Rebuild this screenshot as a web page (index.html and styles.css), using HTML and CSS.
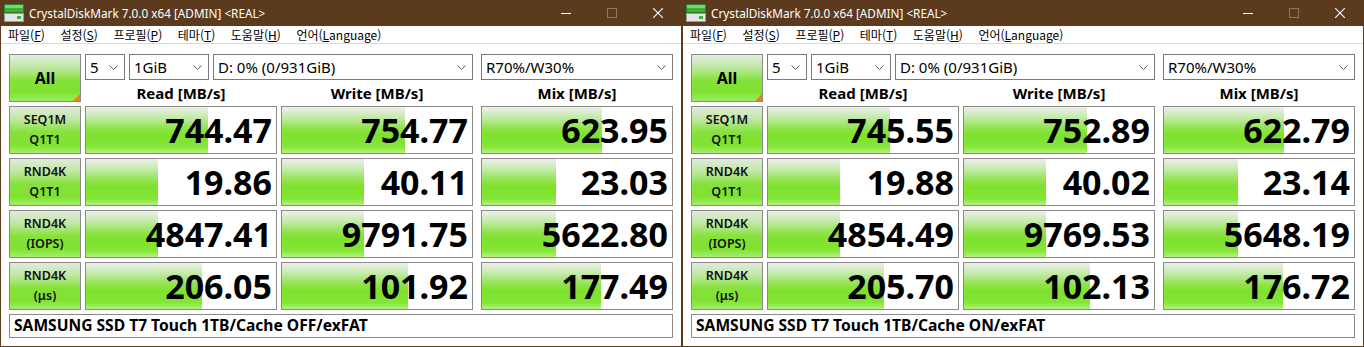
FILE: index.html
```html
<!DOCTYPE html>
<html lang="ko">
<head>
    <meta charset="UTF-8">
    <title>CrystalDiskMark 7.0.0 x64</title>
    <link rel="stylesheet" href="styles.css">
</head>
<body>
<div class="desk">

    <!-- window 1: cache off -->
    <div class="win">
        <div class="titlebar">
            <svg class="appicon" width="20" height="18" viewBox="0 0 20 18">
                <rect x="0.5" y="0.5" width="19" height="8" fill="#3fae3a" stroke="#2b7d28"/>
                <rect x="1" y="1" width="18" height="3" fill="#7fd66f"/>
                <rect x="0.5" y="9.5" width="19" height="8" fill="#e6e6e6" stroke="#9a9a9a"/>
                <rect x="13" y="12" width="4" height="3" fill="#3fae3a"/>
            </svg>
            <span class="title">CrystalDiskMark 7.0.0 x64 [ADMIN] &lt;REAL&gt;</span>
            <div class="controls">
                <span class="ctl"><svg width="10" height="10" viewBox="0 0 10 10"><path d="M0 5.5h10" stroke="#fff" stroke-width="1"/></svg></span>
                <span class="ctl off"><svg width="10" height="10" viewBox="0 0 10 10"><rect x="0.5" y="0.5" width="9" height="9" fill="none" stroke="#8f7762" stroke-width="1"/></svg></span>
                <span class="ctl"><svg width="10" height="10" viewBox="0 0 10 10"><path d="M0 0L10 10M10 0L0 10" stroke="#fff" stroke-width="1.1"/></svg></span>
            </div>
        </div>
        <div class="menubar">
            <span>파일(<u>F</u>)</span>
            <span>설정(<u>S</u>)</span>
            <span>프로필(<u>P</u>)</span>
            <span>테마(<u>T</u>)</span>
            <span>도움말(<u>H</u>)</span>
            <span>언어(<u>L</u>anguage)</span>
        </div>
        <div class="panel">
            <div class="allbtn">All</div>
            <div class="combos">
                <div class="combo count">5<svg class="chev" width="9" height="5" viewBox="0 0 9 5"><path d="M0.5 0.5L4.5 4.5L8.5 0.5" fill="none" stroke="#606060"/></svg></div>
                <div class="combo size">1GiB<svg class="chev" width="9" height="5" viewBox="0 0 9 5"><path d="M0.5 0.5L4.5 4.5L8.5 0.5" fill="none" stroke="#606060"/></svg></div>
                <div class="combo drive">D: 0% (0/931GiB)<svg class="chev" width="9" height="5" viewBox="0 0 9 5"><path d="M0.5 0.5L4.5 4.5L8.5 0.5" fill="none" stroke="#606060"/></svg></div>
            </div>
            <div class="combo mixsel">R70%/W30%<svg class="chev" width="9" height="5" viewBox="0 0 9 5"><path d="M0.5 0.5L4.5 4.5L8.5 0.5" fill="none" stroke="#606060"/></svg></div>
            <div class="head h-read">Read [MB/s]</div>
            <div class="head h-write">Write [MB/s]</div>
            <div class="head h-mix">Mix [MB/s]</div>

            <div class="label">SEQ1M<br>Q1T1</div>
            <div class="val" style="--bar:122px">744.47</div>
            <div class="val" style="--bar:123px">754.77</div>
            <div class="val mixcol" style="--bar:120px">623.95</div>

            <div class="label">RND4K<br>Q1T1</div>
            <div class="val" style="--bar:72px">19.86</div>
            <div class="val" style="--bar:82px">40.11</div>
            <div class="val mixcol" style="--bar:74px">23.03</div>

            <div class="label">RND4K<br>(IOPS)</div>
            <div class="val" style="--bar:72px">4847.41</div>
            <div class="val" style="--bar:82px">9791.75</div>
            <div class="val mixcol" style="--bar:74px">5622.80</div>

            <div class="label">RND4K<br>(μs)</div>
            <div class="val" style="--bar:116px">206.05</div>
            <div class="val" style="--bar:126px">101.92</div>
            <div class="val mixcol" style="--bar:119px">177.49</div>

            <div class="comment">SAMSUNG SSD T7 Touch 1TB/Cache OFF/exFAT</div>
        </div>
    </div>

    <!-- window 2: cache on -->
    <div class="win">
        <div class="titlebar">
            <svg class="appicon" width="20" height="18" viewBox="0 0 20 18">
                <rect x="0.5" y="0.5" width="19" height="8" fill="#3fae3a" stroke="#2b7d28"/>
                <rect x="1" y="1" width="18" height="3" fill="#7fd66f"/>
                <rect x="0.5" y="9.5" width="19" height="8" fill="#e6e6e6" stroke="#9a9a9a"/>
                <rect x="13" y="12" width="4" height="3" fill="#3fae3a"/>
            </svg>
            <span class="title">CrystalDiskMark 7.0.0 x64 [ADMIN] &lt;REAL&gt;</span>
            <div class="controls">
                <span class="ctl"><svg width="10" height="10" viewBox="0 0 10 10"><path d="M0 5.5h10" stroke="#fff" stroke-width="1"/></svg></span>
                <span class="ctl off"><svg width="10" height="10" viewBox="0 0 10 10"><rect x="0.5" y="0.5" width="9" height="9" fill="none" stroke="#8f7762" stroke-width="1"/></svg></span>
                <span class="ctl"><svg width="10" height="10" viewBox="0 0 10 10"><path d="M0 0L10 10M10 0L0 10" stroke="#fff" stroke-width="1.1"/></svg></span>
            </div>
        </div>
        <div class="menubar">
            <span>파일(<u>F</u>)</span>
            <span>설정(<u>S</u>)</span>
            <span>프로필(<u>P</u>)</span>
            <span>테마(<u>T</u>)</span>
            <span>도움말(<u>H</u>)</span>
            <span>언어(<u>L</u>anguage)</span>
        </div>
        <div class="panel">
            <div class="allbtn">All</div>
            <div class="combos">
                <div class="combo count">5<svg class="chev" width="9" height="5" viewBox="0 0 9 5"><path d="M0.5 0.5L4.5 4.5L8.5 0.5" fill="none" stroke="#606060"/></svg></div>
                <div class="combo size">1GiB<svg class="chev" width="9" height="5" viewBox="0 0 9 5"><path d="M0.5 0.5L4.5 4.5L8.5 0.5" fill="none" stroke="#606060"/></svg></div>
                <div class="combo drive">D: 0% (0/931GiB)<svg class="chev" width="9" height="5" viewBox="0 0 9 5"><path d="M0.5 0.5L4.5 4.5L8.5 0.5" fill="none" stroke="#606060"/></svg></div>
            </div>
            <div class="combo mixsel">R70%/W30%<svg class="chev" width="9" height="5" viewBox="0 0 9 5"><path d="M0.5 0.5L4.5 4.5L8.5 0.5" fill="none" stroke="#606060"/></svg></div>
            <div class="head h-read">Read [MB/s]</div>
            <div class="head h-write">Write [MB/s]</div>
            <div class="head h-mix">Mix [MB/s]</div>

            <div class="label">SEQ1M<br>Q1T1</div>
            <div class="val" style="--bar:122px">745.55</div>
            <div class="val" style="--bar:123px">752.89</div>
            <div class="val mixcol" style="--bar:120px">622.79</div>

            <div class="label">RND4K<br>Q1T1</div>
            <div class="val" style="--bar:72px">19.88</div>
            <div class="val" style="--bar:82px">40.02</div>
            <div class="val mixcol" style="--bar:74px">23.14</div>

            <div class="label">RND4K<br>(IOPS)</div>
            <div class="val" style="--bar:72px">4854.49</div>
            <div class="val" style="--bar:82px">9769.53</div>
            <div class="val mixcol" style="--bar:74px">5648.19</div>

            <div class="label">RND4K<br>(μs)</div>
            <div class="val" style="--bar:116px">205.70</div>
            <div class="val" style="--bar:126px">102.13</div>
            <div class="val mixcol" style="--bar:119px">176.72</div>

            <div class="comment">SAMSUNG SSD T7 Touch 1TB/Cache ON/exFAT</div>
        </div>
    </div>

</div>
</body>
</html>
```

FILE: styles.css
```css
body {
    margin: 0;
    background-color: #5c3a1e;
    font-family: "Noto Sans", "Noto Sans CJK KR", sans-serif;
    color: #000;
}
.desk {
    display: flex;
    width: 1364px;
    height: 347px;
}
.win {
    width: 682px;
    height: 347px;
    box-sizing: border-box;
    border: 1px solid #5c3a1e;
    border-top: 0;
    background-color: #fff;
    display: flex;
    flex-direction: column;
}
.titlebar {
    height: 26px;
    flex: none;
    display: flex;
    align-items: center;
    background-color: #5c3a1e;
    color: #fff;
}
.appicon {
    margin-left: 3px;
    margin-right: 5px;
}
.title {
    font-size: 11.75px;
    white-space: nowrap;
}
.controls {
    margin-left: auto;
    display: flex;
    height: 100%;
}
.ctl {
    width: 46px;
    display: flex;
    align-items: center;
    justify-content: center;
}
.menubar {
    height: 17px;
    flex: none;
    display: flex;
    align-items: center;
    gap: 15.6px;
    padding-left: 7px;
    font-family: "Noto Sans CJK KR", sans-serif;
    font-size: 12px;
    border-bottom: 1px solid #dadada;
}
.menubar u {
    text-underline-offset: 1px;
}
.panel {
    padding: 10px 8px 0 8px;
    display: grid;
    grid-template-columns: 72px 192px 192px 196px;
    grid-template-rows: 26px 18px repeat(4, 48px) 24px;
    column-gap: 4px;
    row-gap: 4px;
}
.allbtn {
    grid-column: 1;
    grid-row: 1 / span 2;
    position: relative;
    box-sizing: border-box;
    border: 1px solid #8a8a8a;
    background: linear-gradient(to bottom, #e3ede0 0%, #b9e79a 30%, #86e13b 55%, #7fe12e 80%, #9ded62 100%);
    display: flex;
    align-items: center;
    justify-content: center;
    font-weight: bold;
    font-size: 16px;
}
.allbtn::after {
    content: "";
    position: absolute;
    right: 0;
    bottom: 0;
    border-style: solid;
    border-width: 0 0 7px 7px;
    border-color: transparent transparent #f07f1a transparent;
}
.combos {
    grid-column: 2 / span 2;
    grid-row: 1;
    display: flex;
    gap: 4px;
}
.combo {
    box-sizing: border-box;
    border: 1px solid #7a7a7a;
    background-color: #fff;
    display: flex;
    align-items: center;
    justify-content: space-between;
    padding: 0 6px 0 4px;
    font-size: 15px;
    white-space: nowrap;
}
.count { width: 40px; }
.size { width: 80px; }
.drive { flex: 1; }
.mixsel {
    grid-column: 4;
    grid-row: 1;
    margin-left: 4px;
}
.head {
    grid-row: 2;
    font-weight: bold;
    font-size: 15px;
    line-height: 18px;
    text-align: center;
}
.h-read { grid-column: 2; }
.h-write { grid-column: 3; }
.h-mix { grid-column: 4; margin-left: 4px; }
.label {
    box-sizing: border-box;
    border: 1px solid #8a8a8a;
    background: linear-gradient(to bottom, #e1ebdd 0%, #bde79f 28%, #86e13b 55%, #80e230 82%, #a4ee6c 100%);
    text-align: center;
    font-size: 12.5px;
    font-weight: 600;
    line-height: 20px;
    padding-top: 3px;
    color: #111;
}
.val {
    box-sizing: border-box;
    border: 1px solid #8a8a8a;
    background: linear-gradient(to bottom, #eeefec 0%, #c4eaac 22%, #8ee346 48%, #7ee22d 62%, #84e636 86%, #b3f17f 100%) 0 0 / var(--bar) 100% no-repeat, #fff;
    text-align: right;
    padding-right: 4px;
    font-size: 34px;
    font-weight: bold;
    line-height: 46px;
}
.mixcol { margin-left: 4px; }
.comment {
    grid-column: 1 / -1;
    box-sizing: border-box;
    border: 1px solid #8a8a8a;
    background-color: #fff;
    font-size: 15.6px;
    font-weight: bold;
    line-height: 21px;
    padding-left: 4px;
}
```
